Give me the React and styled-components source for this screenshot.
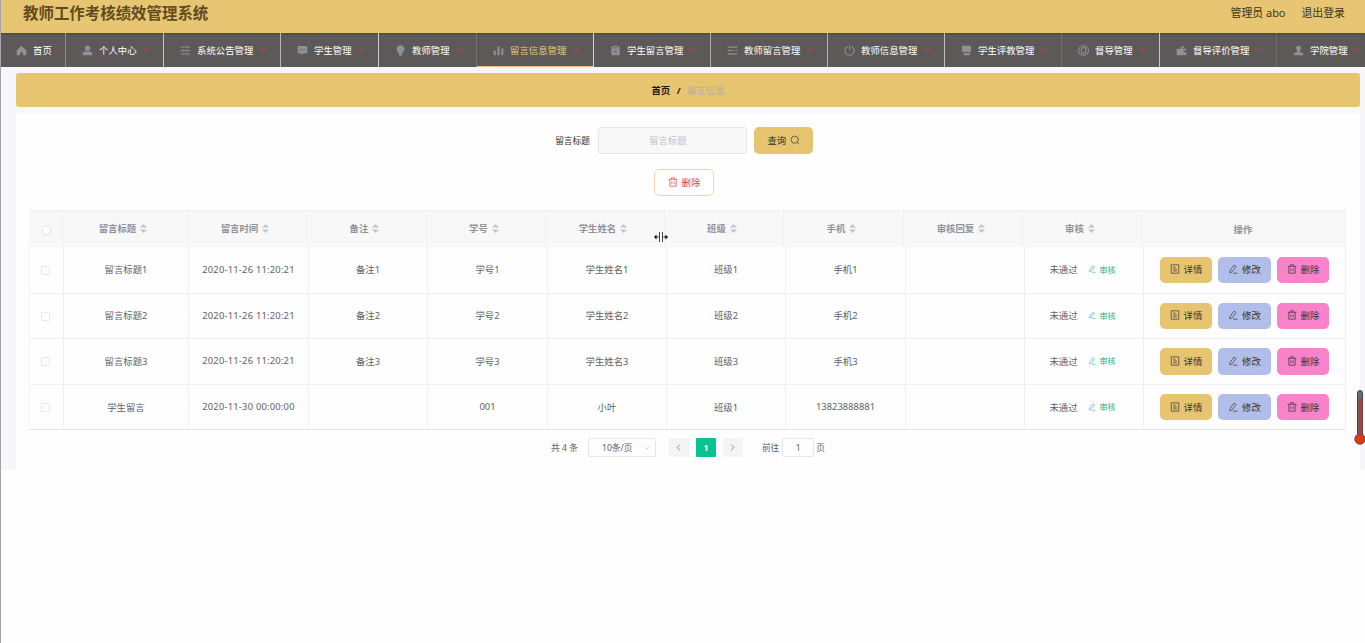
import React from "react";
import styled, { createGlobalStyle } from "styled-components";

const menus = [
  { name: "首页", icon: "home", width: 66, line: "#918e8e" },
  { name: "个人中心", icon: "user", width: 98, line: "#c4c2c2", arrow: true },
  { name: "系统公告管理", icon: "sliders", width: 117, line: "#b5b3b3", arrow: true },
  { name: "学生管理", icon: "chat", width: 98, line: "#d0cece", arrow: true },
  { name: "教师管理", icon: "pin", width: 98, line: "#777373", arrow: true },
  { name: "留言信息管理", icon: "chart", width: 117, line: "#d4d2d2", arrow: true, active: true },
  { name: "学生留言管理", icon: "clipboard", width: 117, line: "#b0aeae", arrow: true },
  { name: "教师留言管理", icon: "list", width: 117, line: "#b8b6b6", arrow: true },
  { name: "教师信息管理", icon: "power", width: 117, line: "#c0bebe", arrow: true },
  { name: "学生评教管理", icon: "screen", width: 117, line: "#747070", arrow: true },
  { name: "督导管理", icon: "badge", width: 98, line: "#c8c6c6", arrow: true },
  { name: "督导评价管理", icon: "wallet", width: 117, line: "#706c6c", arrow: true },
  { name: "学院管理", icon: "person", width: 98, line: "#5d5959", arrow: true },
];

const columns = ["留言标题", "留言时间", "备注", "学号", "学生姓名", "班级", "手机", "审核回复", "审核"];

const rows = [
  ["留言标题1", "2020-11-26 11:20:21", "备注1", "学号1", "学生姓名1", "班级1", "手机1", ""],
  ["留言标题2", "2020-11-26 11:20:21", "备注2", "学号2", "学生姓名2", "班级2", "手机2", ""],
  ["留言标题3", "2020-11-26 11:20:21", "备注3", "学号3", "学生姓名3", "班级3", "手机3", ""],
  ["学生留言", "2020-11-30 00:00:00", "", "001", "小叶", "班级1", "13823888881", ""],
];

const line = { fill: "none", stroke: "currentColor", strokeWidth: 1.1 };

const icons = {
  home: <path fill="currentColor" d="M8 1 1 8v7h5v-4.5h4V15h5V8z" />,
  user: (
    <g fill="currentColor">
      <circle cx="8" cy="4.6" r="3.8" />
      <path d="M1 15v-2.5C1 10.500 3 9.400 5 9.400h6c2 0 4 1.100 4 3.100V15z" />
    </g>
  ),
  sliders: (
    <path {...line} strokeWidth="1.6" d="M1 3h8m3 0h3M1 8h3m3 0h8M1 13h8m3 0h3M10.500 1v4M5.500 6v4M10.500 11v4" />
  ),
  chat: (
    <g>
      <path fill="currentColor" d="M1 1.500h14V12H9.500L6 15v-3H1z" />
      <path stroke="#5d5959" strokeWidth="1.4" d="M4 6.800h1.600M7.200 6.800h1.600M10.400 6.800H12" />
    </g>
  ),
  pin: <path fill="currentColor" d="M8 .500c3.500 0 5.800 2.500 5.800 5.700C13.800 9 11 11 10 13v2.500H6V13C5 11 2.200 9 2.200 6.200 2.200 3 4.500.500 8 .500z" />,
  chart: <path fill="currentColor" d="M1 8h3v7H1zM6.500 2h3v13h-3zM12 5h3v10h-3z" />,
  clipboard: (
    <g>
      <path fill="currentColor" d="M2 2h3V1h6v1h3v13H2z" />
      <path stroke="#5d5959" fill="none" strokeWidth="1.2" d="M5 4h6M6 7.500l4 4M10 7.500l-4 4" />
    </g>
  ),
  list: <path {...line} strokeWidth="1.7" d="M1 3h14M1 8h8m3 0h3M1 13h14" />,
  power: <path {...line} strokeWidth="1.500" d="M5 2.200a6.700 6.700 0 1 0 6 0M8 .500V7" />,
  screen: <path fill="currentColor" d="M1.500 1h13v9h-13zM4 11.500h9V15H4z" />,
  badge: (
    <g {...line} strokeWidth="1.500">
      <circle cx="8" cy="8" r="7.200" />
      <rect x="4.800" y="3.800" width="6.400" height="8.400" rx="2.500" />
    </g>
  ),
  wallet: <path fill="currentColor" d="M1 5.500h6V3l4.500-2v3H9.500v1.500H15V8h-4v2.500h4V15H1z" />,
  person: <path fill="currentColor" d="M8 1c2.300 0 3.500 1.600 3.500 3.800 0 1.700-.8 3.200-1.800 4v1.400L15 12.500V15H1v-2.500l5.300-2.300V8.800c-1-.8-1.800-2.300-1.800-4C4.500 2.600 5.700 1 8 1z" />,
  search: (
    <g {...line}>
      <circle cx="7.500" cy="7.500" r="5.800" />
      <path d="m11.600 11.600 3 3" />
    </g>
  ),
  trash: <path {...line} d="M1 3.700h14M5.500 3.500V1.300h5v2.200M2.900 4v10.700h10.200V4M6.200 6.800v4.800M9.800 6.800v4.800" />,
  doc: <path {...line} d="M2 1.300h12v13.400H2zM5 5h4M5 8h6M5 11h6" />,
  edit: <path {...line} d="m3.300 10.300 6.300-8.500 3.200 2.300-6.300 8.600-3.600 1.400zM8 14.700h7" />,
  down: <path {...line} strokeWidth="2.200" d="m2 5 6 6 6-6" />,
  left: <path {...line} strokeWidth="2" d="m10.500 3-5 5 5 5" />,
  right: <path {...line} strokeWidth="2" d="m5.500 3 5 5-5 5" />,
};

const Icon = ({ name, size = 10 }) => (
  <Svg width={size} height={size} viewBox="0 0 16 16">
    {icons[name]}
  </Svg>
);

const App = () => {
  return (
    <Page>
      <Global />
      <Header>
        <Title>教师工作考核绩效管理系统</Title>
        <Account>
          <span>管理员 abo</span>
          <span>退出登录</span>
        </Account>
      </Header>
      <Nav>
        {menus.map((m) => (
          <NavItem key={m.name} $width={m.width} $line={m.line} $active={m.active}>
            <NavIcon>
              <Icon name={m.icon} size={11} />
            </NavIcon>
            <NavText>{m.name}</NavText>
            {m.arrow && (
              <Arrow>
                <Icon name="down" size={8} />
              </Arrow>
            )}
          </NavItem>
        ))}
      </Nav>
      <Main>
        <Crumb>
          <b>首页</b>
          <b>/</b>
          <span>留言信息</span>
        </Crumb>
        <Card>
          <Search>
            <Label>留言标题</Label>
            <Input placeholder="留言标题" />
            <QueryButton>
              查询 <Icon name="search" />
            </QueryButton>
          </Search>
          <Tools>
            <RemoveButton>
              <Icon name="trash" />
              删除
            </RemoveButton>
          </Tools>
          <Table>
            <HeadRow>
              <Th>
                <Check $head />
              </Th>
              {columns.map((c) => (
                <Th key={c}>
                  {c}
                  <Sort width="7" height="9" viewBox="0 0 7 9">
                    <path d="M3.500 0 7 3.600H0zM3.500 9 7 5.400H0z" />
                  </Sort>
                </Th>
              ))}
              <Th $last>操作</Th>
            </HeadRow>
            {rows.map((r, i) => (
              <Row key={i}>
                <Td>
                  <Check />
                </Td>
                {r.map((text, j) => (
                  <Td key={j} $date={j === 1}>
                    {text}
                  </Td>
                ))}
                <Td $audit>
                  未通过
                  <Audit>
                    <Icon name="edit" size={8} />
                    审核
                  </Audit>
                </Td>
                <Td $last>
                  <Action $bg="#e6c470">
                    <Icon name="doc" />
                    详情
                  </Action>
                  <Action $bg="#b2beea">
                    <Icon name="edit" />
                    修改
                  </Action>
                  <Action $bg="#f983cb">
                    <Icon name="trash" />
                    删除
                  </Action>
                </Td>
              </Row>
            ))}
          </Table>
          <Pagination>
            <Total>共 4 条</Total>
            <Select>
              10条/页
              <Icon name="down" size={6} />
            </Select>
            <PageButton>
              <Icon name="left" size={9} />
            </PageButton>
            <PageButton $active>1</PageButton>
            <PageButton>
              <Icon name="right" size={9} />
            </PageButton>
            <Jump>
              前往
              <JumpBox>1</JumpBox>页
            </Jump>
          </Pagination>
        </Card>
      </Main>
      <Cursor width="14" height="12" viewBox="0 0 14 12">
        <path d="M5.500 1v10M8.500 1v10" stroke="#444" fill="none" />
        <path d="M0 6l2.500-2.500v2H4.500v1h-2v2zM14 6l-2.500-2.500v2H9.500v1h2v2z" fill="#111" />
      </Cursor>
      <Thermometer width="12" height="56" viewBox="0 0 12 56">
        <rect x="3.500" y=".500" width="5" height="46" rx="2.500" fill="#617377" stroke="#39474b" />
        <circle cx="6" cy="49" r="5.200" fill="#e23a14" stroke="#4a5558" />
        <path d="M6 8v38" stroke="#b8392f" strokeWidth="2.600" />
      </Thermometer>
    </Page>
  );
};

export default App;

const Global = createGlobalStyle`
  * {
    box-sizing: border-box;
  }
  body {
    margin: 0;
    overflow: hidden;
    background: #fefefe;
    font-family: "Noto Sans", "Noto Sans CJK SC", sans-serif;
    font-size: 9.4px;
    color: #606266;
  }
  button, input {
    font-family: inherit;
  }
`;

const Svg = styled.svg`
  display: block;
  flex: none;
`;

const Page = styled.div`
  position: relative;
  height: 643px;
  overflow: hidden;
  border-left: 1px solid #a5a5a9;
`;

const Header = styled.header`
  display: flex;
  justify-content: space-between;
  height: 33px;
  margin-left: -1px;
  padding: 0 20px 0 23px;
  background: #e8c572;
`;

const Title = styled.div`
  font-size: 15.45px;
  line-height: 27px;
  font-weight: bold;
  color: #5f4c20;
`;

const Account = styled.div`
  display: flex;
  gap: 16px;
  font-size: 10.9px;
  line-height: 26px;
  color: #40361f;
`;

const Nav = styled.nav`
  display: flex;
  height: 34px;
  margin-left: -1px;
  overflow: hidden;
  background: #5d5959;
  box-shadow: inset 0 2px 2px -1px #494543;
`;

const NavItem = styled.div`
  display: flex;
  flex: none;
  align-items: center;
  width: ${(props) => props.$width}px;
  padding: 0 13px 0 13px;
  border-right: 1px solid ${(props) => props.$line};
  color: ${(props) => (props.$active ? "#e8c572" : "#fff")};
  box-shadow: ${(props) => (props.$active ? "inset 0 -1px 0 #e8c572" : "none")};
`;

const NavIcon = styled.span`
  display: flex;
  flex: none;
  justify-content: center;
  width: 17px;
  margin-right: 3px;
  color: #8f9197;
`;

const NavText = styled.span`
  flex: 1;
  white-space: nowrap;
`;

const Arrow = styled.span`
  color: #a64a53;
`;

const Main = styled.main`
  height: 403px;
  padding: 6px 5px 0 15px;
  background: #f7f7fb;
`;

const Crumb = styled.div`
  display: flex;
  align-items: center;
  justify-content: center;
  gap: 6.5px;
  height: 34px;
  margin-bottom: 6px;
  border-radius: 3px;
  background: #e6c470;
  b {
    color: #1d1808;
  }
  span {
    color: #b0ada6;
  }
`;

const Card = styled.section`
  height: 357px;
  padding: 14px 14px 0 13px;
  background: #fefefe;
`;

const Search = styled.div`
  display: flex;
  align-items: center;
  justify-content: center;
  height: 27px;
  padding-right: 7px;
`;

const Label = styled.label`
  margin-right: 8px;
  font-size: 8.7px;
  color: #333;
`;

const Input = styled.input`
  width: 149px;
  height: 27px;
  margin-right: 7px;
  padding: 0 17px 0 8px;
  border: 1px solid #e4e5e9;
  border-radius: 3px;
  background: #f8f8f9;
  font-size: 9.4px;
  text-align: center;
  &::placeholder {
    color: #bfc1c9;
  }
`;

const Button = styled.button`
  display: flex;
  align-items: center;
  justify-content: center;
  gap: 4px;
  height: 26.500px;
  padding: 0 0 1px;
  border: none;
  border-radius: 5px;
  font-size: 9.4px;
  color: #333;
  cursor: pointer;
`;

const QueryButton = styled(Button)`
  width: 59px;
  padding-left: 1px;
  background: #e6c470;
`;

const Tools = styled.div`
  display: flex;
  justify-content: center;
  height: 56px;
  padding: 15px 7px 0 0;
`;

const RemoveButton = styled(Button)`
  width: 60px;
  border: 1px solid #eed9a3;
  background: #fff;
  color: #d53a43;
`;

const Table = styled.div`
  width: 1317px;
  border: 1px solid #ebeef5;
  border-left-color: #f3f4f8;
  border-bottom-color: #e3e4ea;
`;

const HeadRow = styled.div`
  display: grid;
  grid-template-columns: 33px 125px 119px 120px 119px 119px 119px 120px 119px 119px 203px;
  height: 36px;
  background: #f8f8f9;
`;

const Row = styled.div`
  display: grid;
  grid-template-columns: 34px 125px 120px 119px 120px 119px 119px 120px 119px 119px 201px;
  height: 45.600px;
  & + & {
    border-top: 1px solid #eff0f4;
  }
`;

const Cell = styled.div`
  display: flex;
  align-items: center;
  justify-content: center;
  white-space: nowrap;
  border-right: ${(props) => (props.$last ? "none" : "1px solid #eff0f5")};
`;

const Th = styled(Cell)`
  gap: 4px;
  padding: ${(props) => (props.$last ? "0 1px 0 0" : "0 4px 2px 0")};
  font-weight: bold;
  color: #909399;
`;

const Td = styled(Cell)`
  gap: ${(props) => (props.$last ? "6px" : "0")};
  padding: ${(props) => (props.$last ? "0" : props.$audit ? "0 3px 1px 0" : "0 0 1px")};
  letter-spacing: ${(props) => (props.$date ? "0.21px" : "normal")};
`;

const Check = styled.span`
  flex: none;
  width: 9px;
  height: 9px;
  margin: ${(props) => (props.$head ? "4px 0 0 4px" : "2px 2px 0 0")};
  border: 1px solid #e6e8ec;
  border-radius: 1px;
  background: #fff;
`;

const Sort = styled.svg`
  fill: #c0c4cc;
`;

const Audit = styled.span`
  display: flex;
  align-items: center;
  gap: 4px;
  margin-left: 10px;
  font-size: 8px;
  color: #1bb487;
`;

const Action = styled(Button)`
  width: 52.500px;
  background: ${(props) => props.$bg};
`;

const Pagination = styled.div`
  display: flex;
  align-items: center;
  justify-content: center;
  height: 19px;
  margin-top: 8px;
  padding-left: 1px;
  font-size: 8.7px;
`;

const Total = styled.span`
  margin-right: 10px;
`;

const Select = styled.div`
  display: flex;
  align-items: center;
  justify-content: space-between;
  width: 68px;
  height: 19px;
  margin-right: 13px;
  padding: 0 5px 0 13px;
  border: 1px solid #e4e6ec;
  border-radius: 2px;
  svg {
    color: #c0c4cc;
  }
`;

const PageButton = styled.div`
  display: flex;
  align-items: center;
  justify-content: center;
  width: 20px;
  height: 19px;
  margin-right: 7px;
  border-radius: 1px;
  font-weight: bold;
  background: ${(props) => (props.$active ? "#07c392" : "#f4f4f6")};
  color: ${(props) => (props.$active ? "#fff" : "#b4b7bd")};
`;

const Jump = styled.div`
  display: flex;
  align-items: center;
  margin-left: 12px;
`;

const JumpBox = styled.span`
  width: 32px;
  height: 19px;
  margin: 0 2px 0 3px;
  border: 1px solid #e4e6ec;
  border-radius: 2px;
  line-height: 18px;
  text-align: center;
`;

const Cursor = styled.svg`
  position: absolute;
  left: 653px;
  top: 231px;
`;

const Thermometer = styled.svg`
  position: absolute;
  left: 1353px;
  top: 390px;
`;
